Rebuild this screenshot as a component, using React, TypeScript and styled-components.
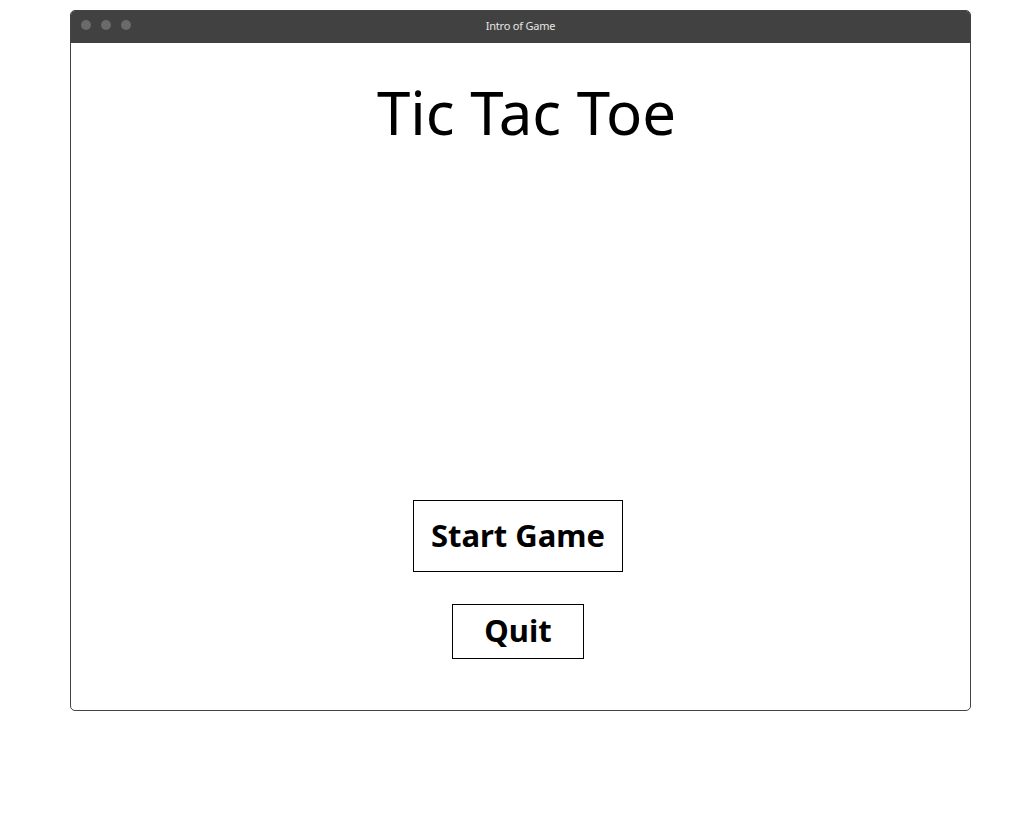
import styled, { createGlobalStyle } from "styled-components";

const GlobalStyle = createGlobalStyle`
  body {
    margin: 0;
    background: #ffffff;
    font-family: "Noto Sans", "Open Sans", sans-serif;
  }
`;

const App = () => {
  return (
    <Page>
      <GlobalStyle />
      <Window>
        <TitleBar>
          <Dots>
            <Dot />
            <Dot />
            <Dot />
          </Dots>
          <WindowTitle>Intro of Game</WindowTitle>
        </TitleBar>
        <Body>
          <Heading>Tic Tac Toe</Heading>
          <Menu>
            <MenuButton wide>Start Game</MenuButton>
            <MenuButton>Quit</MenuButton>
          </Menu>
        </Body>
      </Window>
    </Page>
  );
};

export default App;

const Page = styled.div`
  padding: 10px 0 0 70px;
`;

const Window = styled.div`
  width: 899px;
  height: 699px;
  border: 1px solid #444444;
  border-radius: 5px;
  overflow: hidden;
  display: flex;
  flex-direction: column;
`;

const TitleBar = styled.div`
  position: relative;
  height: 32px;
  background-color: #414141;
  display: flex;
  align-items: center;
  justify-content: center;
  flex-shrink: 0;
`;

const Dots = styled.div`
  position: absolute;
  left: 10px;
  top: 9px;
  display: flex;
  gap: 10px;
`;

const Dot = styled.span`
  width: 10px;
  height: 10px;
  border-radius: 50%;
  background-color: #6a6a6a;
`;

const WindowTitle = styled.span`
  color: #e6e6e6;
  font-size: 11px;
  line-height: 14px;
  margin-bottom: 2px;
  letter-spacing: -0.2px;
`;

const Body = styled.div`
  flex: 1;
  display: flex;
  flex-direction: column;
  align-items: center;
  padding-bottom: 51px;
`;

const Heading = styled.h1`
  margin: 24px 0 0 12px;
  font-size: 60px;
  font-weight: 400;
  line-height: 90px;
  color: #000000;
  letter-spacing: 0;
`;

const Menu = styled.div`
  margin-top: auto;
  display: flex;
  flex-direction: column;
  align-items: center;
  gap: 32px;
  margin-left: -5px;
`;

const MenuButton = styled.button<{ wide?: boolean }>`
  font-family: "Noto Sans", sans-serif;
  font-weight: 700;
  font-size: 31px;
  line-height: 40px;
  color: #000000;
  background: #ffffff;
  border: 1px solid #000000;
  border-radius: 0;
  padding: 0 0 3px;
  width: ${({ wide }) => (wide ? "210px" : "132px")};
  height: ${({ wide }) => (wide ? "72px" : "55px")};
  letter-spacing: 0;
`;
